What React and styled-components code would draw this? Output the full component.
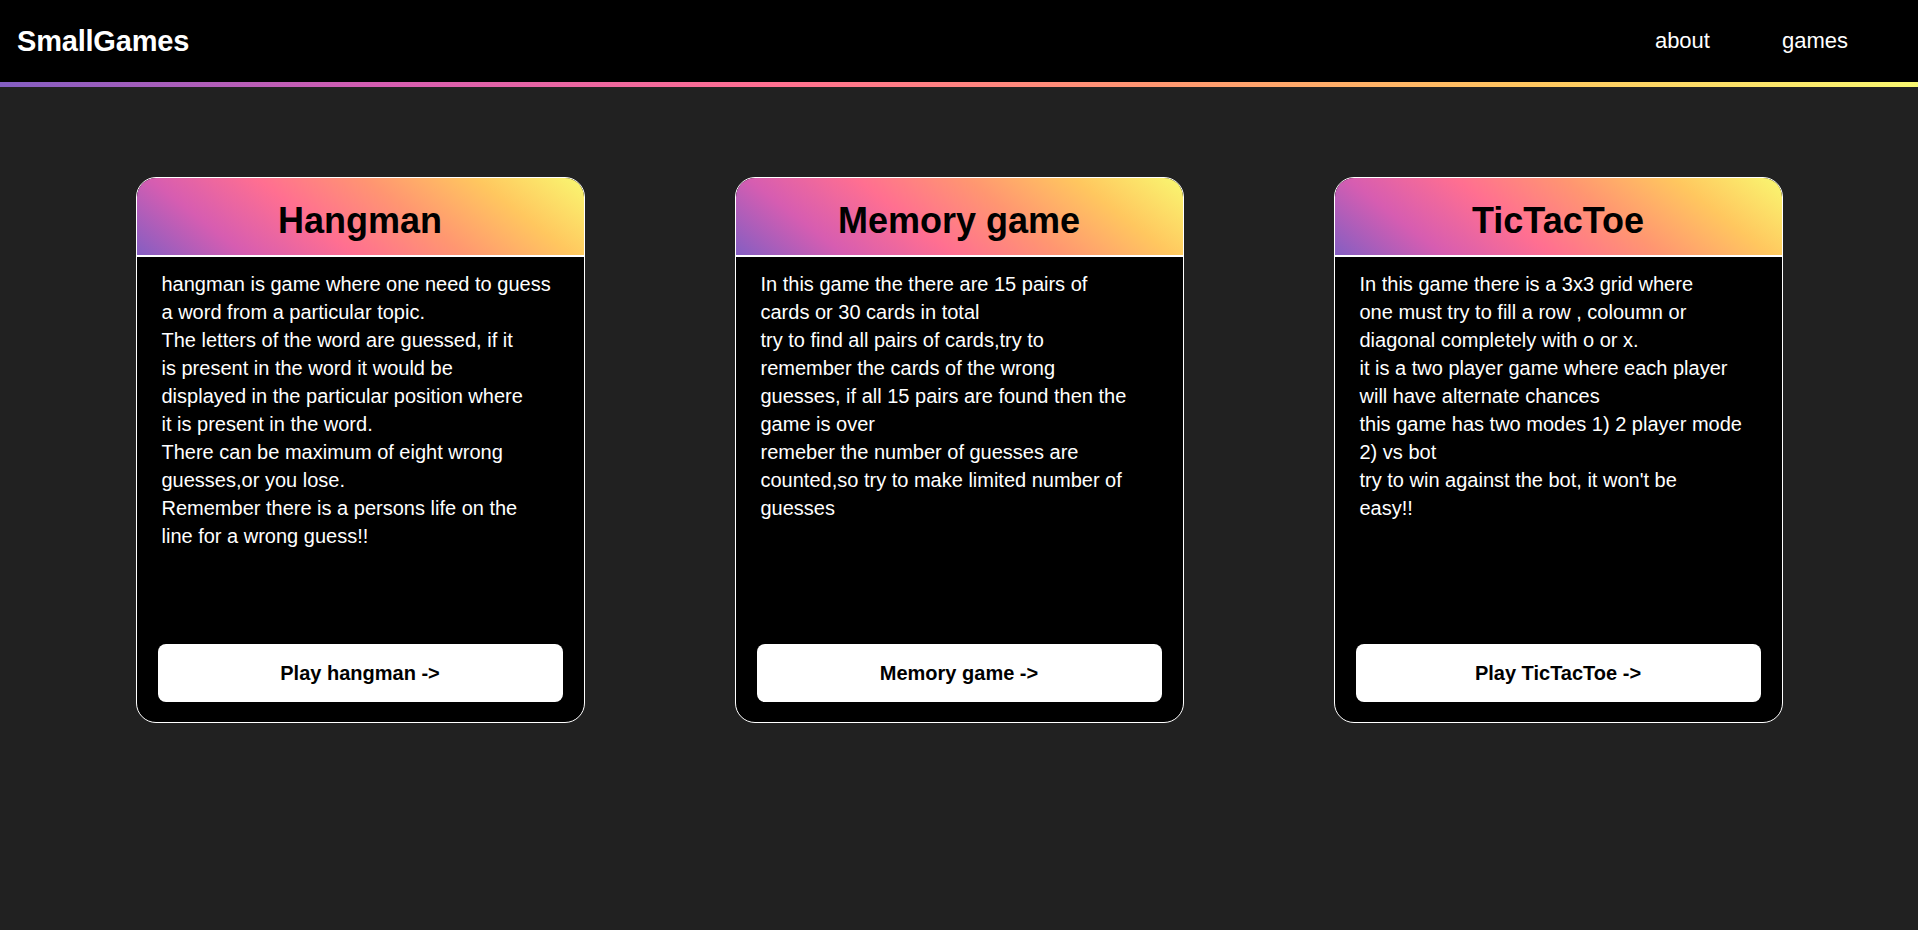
import React from "react";
import styled, { createGlobalStyle } from "styled-components";

const GlobalStyle = createGlobalStyle`
  * { box-sizing: border-box; }
  html, body { margin: 0; padding: 0; }
  body {
    background: #212121;
    font-family: "Comic Sans MS", "Liberation Sans", Arial, sans-serif;
    color: #fff;
    min-height: 930px;
  }
`;

const GRADIENT = "#845ec2, #d65db1, #ff6f91, #ff9671, #ffc75f, #f9f871";

const NavBar = styled.header`
  height: 87px;
  background: #000;
  display: flex;
  align-items: center;
  justify-content: space-between;
  padding: 0 70px 5px 17px;
  position: relative;
  &::after {
    content: "";
    position: absolute;
    left: 0;
    right: 0;
    bottom: 0;
    height: 5px;
    background: linear-gradient(to right, ${GRADIENT});
  }
`;

const Logo = styled.div`
  font-size: 29px;
  font-weight: bold;
  color: #fff;
  letter-spacing: -0.2px;
`;

const NavLinks = styled.nav`
  display: flex;
  gap: 72px;
`;

const NavLink = styled.a`
  font-size: 22px;
  color: #fff;
  text-decoration: none;
  cursor: pointer;
`;

const Main = styled.main`
  display: flex;
  justify-content: center;
  gap: 150px;
  padding-top: 90px;
`;

const Card = styled.section`
  width: 449px;
  height: 546px;
  border: 1px solid #fff;
  border-radius: 20px;
  background: #000;
  overflow: hidden;
  display: flex;
  flex-direction: column;
`;

const CardHeader = styled.div`
  height: 79px;
  border-bottom: 2px solid #fff;
  background: linear-gradient(38deg, ${GRADIENT});
  display: flex;
  align-items: center;
  justify-content: center;
  padding-top: 8px;
`;

const Title = styled.h2`
  margin: 0;
  font-size: 36px;
  font-weight: bold;
  color: #000;
`;

const CardBody = styled.div`
  flex: 1;
  padding: 13px 25px 0 25px;
  font-size: 20px;
  line-height: 28px;
  color: #fff;
`;

const Line = styled.p`
  margin: 0;
  white-space: nowrap;
`;

const PlayButton = styled.button`
  margin: 0 21px 20px 21px;
  height: 58px;
  border: none;
  border-radius: 8px;
  background: #fff;
  color: #000;
  font-family: inherit;
  font-size: 20px;
  font-weight: bold;
  cursor: pointer;
`;

const games = [
  {
    title: "Hangman",
    button: "Play hangman ->",
    lines: [
      ["hangman is game where one need to guess", "a word from a particular topic."],
      [
        "The letters of the word are guessed, if it",
        "is present in the word it would be",
        "displayed in the particular position where",
        "it is present in the word.",
      ],
      ["There can be maximum of eight wrong", "guesses,or you lose."],
      ["Remember there is a persons life on the", "line for a wrong guess!!"],
    ],
  },
  {
    title: "Memory game",
    button: "Memory game ->",
    lines: [
      ["In this game the there are 15 pairs of", "cards or 30 cards in total"],
      [
        "try to find all pairs of cards,try to",
        "remember the cards of the wrong",
        "guesses, if all 15 pairs are found then the",
        "game is over",
      ],
      [
        "remeber the number of guesses are",
        "counted,so try to make limited number of",
        "guesses",
      ],
    ],
  },
  {
    title: "TicTacToe",
    button: "Play TicTacToe ->",
    lines: [
      [
        "In this game there is a 3x3 grid where",
        "one must try to fill a row , coloumn or",
        "diagonal completely with o or x.",
      ],
      ["it is a two player game where each player", "will have alternate chances"],
      ["this game has two modes 1) 2 player mode", "2) vs bot"],
      ["try to win against the bot, it won't be", "easy!!"],
    ],
  },
];

export default function App() {
  return (
    <>
      <GlobalStyle />
      <NavBar>
        <Logo>SmallGames</Logo>
        <NavLinks>
          <NavLink>about</NavLink>
          <NavLink>games</NavLink>
        </NavLinks>
      </NavBar>
      <Main>
        {games.map((g) => (
          <Card key={g.title}>
            <CardHeader>
              <Title>{g.title}</Title>
            </CardHeader>
            <CardBody>
              {g.lines.map((para, i) => (
                <Line key={i}>
                  {para.map((l, j) => (
                    <React.Fragment key={j}>
                      {j > 0 && <br />}
                      {l}
                    </React.Fragment>
                  ))}
                </Line>
              ))}
            </CardBody>
            <PlayButton>{g.button}</PlayButton>
          </Card>
        ))}
      </Main>
    </>
  );
}
